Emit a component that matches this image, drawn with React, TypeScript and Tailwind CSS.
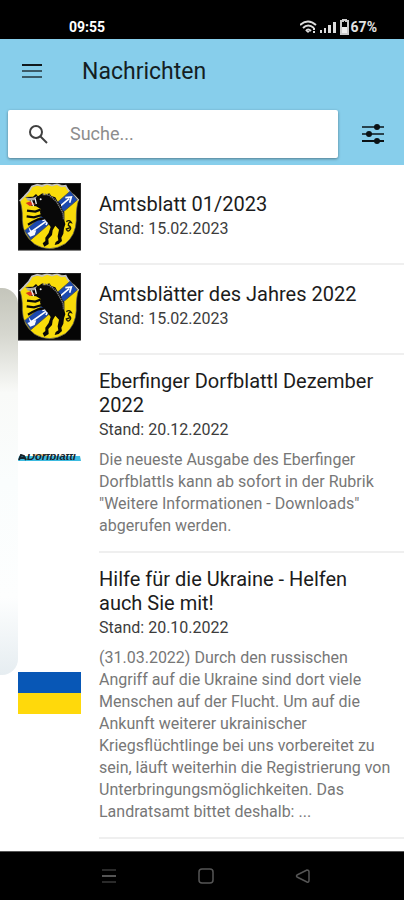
import React from "react";

interface NewsItem {
  title: string;
  date: string;
  image: "crest" | "dorfblattl" | "ukraine";
  text?: string;
}

const news: NewsItem[] = [
  { title: "Amtsblatt 01/2023", date: "15.02.2023", image: "crest" },
  { title: "Amtsblätter des Jahres 2022", date: "15.02.2023", image: "crest" },
  {
    title: "Eberfinger Dorfblattl Dezember 2022",
    date: "20.12.2022",
    image: "dorfblattl",
    text: 'Die neueste Ausgabe des Eberfinger Dorfblattls kann ab sofort in der Rubrik "Weitere Informationen - Downloads" abgerufen werden.',
  },
  {
    title: "Hilfe für die Ukraine - Helfen auch Sie mit!",
    date: "20.10.2022",
    image: "ukraine",
    text: "(31.03.2022) Durch den russischen Angriff auf die Ukraine sind dort viele Menschen auf der Flucht. Um auf die Ankunft weiterer ukrainischer Kriegsflüchtlinge bei uns vorbereitet zu sein, läuft weiterhin die Registrierung von Unterbringungsmöglichkeiten. Das Landratsamt bittet deshalb: ...",
  },
];

const Crest: React.FC = () => (
  <svg viewBox="0 0 189 202" className="block w-full" role="img" aria-label="Wappen">
    <rect width="189" height="202" fill="#050505" />
    {/* shield */}
    <path
      d="M6 54L19 40Q34 27 42 10Q65 2 95 4Q125 2 143 9Q151 26 168 37L182 51Q174 72 175 112Q173 158 142 182Q95 211 50 184Q14 158 13 112Q14 76 6 54Z"
      fill="#f8dc0a"
      stroke="#555"
      strokeWidth="2"
    />
    <path
      d="M5 54L20 39Q34 27 42 10L58 5L72 9L87 3L102 8L117 3L130 10L143 8Q151 26 168 37L182 52"
      fill="none"
      stroke="#c4c4c4"
      strokeWidth="5"
    />
    {/* blue bend with the two arrows */}
    <path d="M157 24L178 51L38 171L20 143Z" fill="#1c49ae" stroke="#4a4a35" strokeWidth="2" />
    <path d="M126 70L154 46M142 44L160 42L155 59" fill="none" stroke="#fff" strokeWidth="5" />
    <path d="M39 147L84 115M73 112L92 108L84 126" fill="none" stroke="#fff" strokeWidth="5" />
    <path d="M31 131L40 143L55 142L50 156L37 161L28 150L36 147Z" fill="#f5f8ff" />
    {/* boar */}
    <path
      d="M22 42L45 41L54 33L60 40L73 31L80 37L94 31L100 39L112 43L118 54L128 64L132 78L139 88L139 112L142 124L138 136L136 152L130 164L132 174L122 183L110 186L113 177L121 172L119 160L123 140L112 128L104 142L102 156L91 168L92 183L79 191L74 181L82 174L82 164L92 150L98 132L88 118L78 106L70 100L66 88L68 78L54 70L40 68L30 62L40 56Z"
      fill="#080808"
    />
    <path d="M68 80L52 86L27 83M72 96L48 103L26 100M80 106L60 109L42 118L30 125" fill="none" stroke="#080808" strokeWidth="7" />
    <path d="M74 34L91 35L103 44L116 56L126 73L135 90L137 110" fill="none" stroke="#777" strokeWidth="5" strokeDasharray="4 2" />
    <path d="M24 43Q42 48 58 39L48 52L29 53Z" fill="#aaa" />
    <path d="M23 60L38 55L52 64L35 69Z" fill="#db391c" />
    <path d="M40 52L47 70M51 46L55 63" stroke="#eee" strokeWidth="4" />
    <circle cx="68" cy="49" r="3" fill="#eee" />
    <path d="M145 116Q155 109 160 119Q151 116 151 127Q161 133 157 139Q149 150 145 138L157 134" fill="none" stroke="#15150b" strokeWidth="4" />
    <rect x="1" y="1" width="187" height="200" fill="none" stroke="#333" strokeWidth="2" />
  </svg>
);

const DorfblattlLogo: React.FC = () => (
  <svg viewBox="0 0 63 20" className="block w-full" role="img" aria-label="Dorfblattl">
    <path d="M1 15H62L63 20H0Z" fill="#3dbbe0" />
    <path d="M15 13H29V15H15Z" fill="#e9bd83" />
    <path d="M1 19L3 14L6 15L8 19M2 17H7" fill="none" stroke="#16232b" strokeWidth="2" />
    <text x="9" y="19" fontFamily="Liberation Sans, sans-serif" fontSize="11" fontWeight="bold" fontStyle="italic" fill="#14232c">
      Dorfblattl
    </text>
    {/* the banner is cut off above the lettering */}
    <path d="M0 0H63V13H0Z" fill="#fff" />
  </svg>
);

const UkraineFlag: React.FC = () => (
  <svg viewBox="0 0 63 42" className="block w-full" role="img" aria-label="Flagge der Ukraine">
    <rect width="63" height="21" fill="#0857b6" />
    <rect y="21" width="63" height="21" fill="#ffd90b" />
  </svg>
);

const pictures = {
  crest: Crest,
  dorfblattl: DorfblattlLogo,
  ukraine: UkraineFlag,
};

const StatusBar: React.FC = () => (
  <div className="flex h-[39px] items-center justify-between bg-black pt-[18px] pr-[27px] pb-1 pl-[69px] text-white">
    <span className="text-sm font-bold">09:55</span>
    <div className="flex items-center">
      <svg width="40" height="16" viewBox="0 0 40 16" aria-hidden="true">
        <g fill="none" stroke="#ddd" strokeWidth="2">
          <path d="M0 6Q8 -1 16 6" />
          <path d="M3 9Q8 4 14 9" />
          <path d="M6 12Q8 9 11 12" />
        </g>
        <path d="M6 12H10L8 14ZM13 9H15V11H13ZM13 12H15V14H13Z" fill="#ddd" />
        <path d="M20 11H22V14H20ZM24 9H26V14H24ZM28 6H31V14H28ZM33 3H36V14H33Z" fill="#ddd" />
      </svg>
      <svg width="9" height="16" viewBox="0 0 9 16" className="mr-0.5" aria-hidden="true">
        <path d="M3 2V1H6V2H8V15H1V2Z" fill="none" stroke="#ccc" strokeWidth="2" />
        <path d="M2 8H7V14H2Z" fill="#eee" />
      </svg>
      <span className="text-sm font-bold text-[#e3e3e3]">67%</span>
    </div>
  </div>
);

const Header: React.FC = () => (
  <header className="bg-[#87ceeb] pb-[7px]">
    <div className="flex h-[63px] items-center gap-[39px] pl-[21px]">
      <button type="button" aria-label="Menü">
        <svg width="22" height="16" viewBox="0 0 22 16" aria-hidden="true">
          <path d="M1 2H21" stroke="#10191d" strokeWidth="2" />
          <path d="M1 8H21M1 14H21" stroke="#3b5a67" strokeWidth="2" />
        </svg>
      </button>
      <h1 className="pt-0.5 text-[23px] leading-8 text-[#141e23]">Nachrichten</h1>
    </div>
    <div className="mt-2 flex items-center pl-2">
      <label className="flex h-12 flex-1 items-center gap-[22px] rounded-xs bg-white pl-5 shadow-[0_1px_3px_rgba(0,0,0,0.4)]">
        <svg width="20" height="20" viewBox="0 0 20 20" aria-hidden="true" fill="none" stroke="#404040" strokeWidth="2">
          <circle cx="8" cy="8" r="6" />
          <path d="M12 12L19 19" />
        </svg>
        <input
          type="text"
          aria-label="Suche"
          placeholder="Suche..."
          className="min-w-0 flex-1 text-lg outline-none placeholder:text-[#8d8d8d]"
        />
      </label>
      <button type="button" aria-label="Filter" className="pr-5 pl-6">
        <svg width="22" height="20" viewBox="0 0 22 20" aria-hidden="true">
          <path d="M0 3H22M0 10H22" stroke="#28424d" strokeWidth="2" />
          <path d="M0 17H22" stroke="#0b1215" strokeWidth="2" />
          <circle cx="15" cy="3" r="3" fill="#0b1215" />
          <circle cx="7" cy="10" r="3" fill="#0b1215" />
          <circle cx="15" cy="17" r="3" fill="#0b1215" />
        </svg>
      </button>
    </div>
  </header>
);

const NewsRow: React.FC<{ item: NewsItem }> = ({ item }) => {
  const Picture = pictures[item.image];
  return (
    <li className="flex min-h-[90px] gap-[18px] pl-[18px]">
      <div className="flex w-[63px] shrink-0 items-center pb-1.5">
        <Picture />
      </div>
      <div
        className={`flex min-w-0 flex-1 flex-col justify-center border-b-2 border-[#efefef] pt-[14px] pr-2 ${
          item.text ? "pb-[14px]" : "pb-5"
        }`}
      >
        <h2 className="mb-px pr-4 text-xl leading-6 text-[#1c1c1c]">{item.title}</h2>
        <p className="text-base leading-6 text-[#3c3c3c]">Stand: {item.date}</p>
        {item.text && <p className="mt-[7px] text-base leading-[22px] text-[#777]">{item.text}</p>}
      </div>
    </li>
  );
};

const NavBar: React.FC = () => (
  <nav className="flex h-[49px] items-center justify-center gap-[81px] border-t border-[#555] bg-black pl-2">
    <button type="button" aria-label="Letzte Apps">
      <svg width="16" height="16" viewBox="0 0 16 16" stroke="#555" aria-hidden="true">
        <path d="M1 2H15M1 14H15" />
        <path d="M1 8H15" strokeWidth="2" />
      </svg>
    </button>
    <button type="button" aria-label="Startseite">
      <svg width="16" height="16" viewBox="0 0 16 16" fill="none" stroke="#555" strokeWidth="1.500" aria-hidden="true">
        <rect x="1" y="1" width="14" height="14" rx="3" />
      </svg>
    </button>
    <button type="button" aria-label="Zurück">
      <svg width="16" height="16" viewBox="0 0 16 16" fill="none" stroke="#555" strokeWidth="1.500" strokeLinejoin="round" aria-hidden="true">
        <path d="M2 7L12 2Q14 2 14 4V12Q14 15 12 14L2 9Q1 8 2 7Z" />
      </svg>
    </button>
  </nav>
);

const App: React.FC = () => {
  return (
    <div className="flex min-h-screen flex-col bg-white font-['Roboto',sans-serif]">
      <StatusBar />
      <Header />
      <main className="relative flex-1 pt-2.5">
        <ul>
          {news.map((item, index) => (
            <NewsRow item={item} key={index} />
          ))}
        </ul>
        <div className="absolute top-[123px] left-0 h-[387px] w-[18px] rounded-r-2xl bg-[linear-gradient(to_bottom,#c4c5bb_0%,#d6d7cf_12%,#f9faf8_27%,#fafdfd_50%,#fdfefe_80%,#e6edf1_100%)]" />
      </main>
      <NavBar />
    </div>
  );
};

export default App;
